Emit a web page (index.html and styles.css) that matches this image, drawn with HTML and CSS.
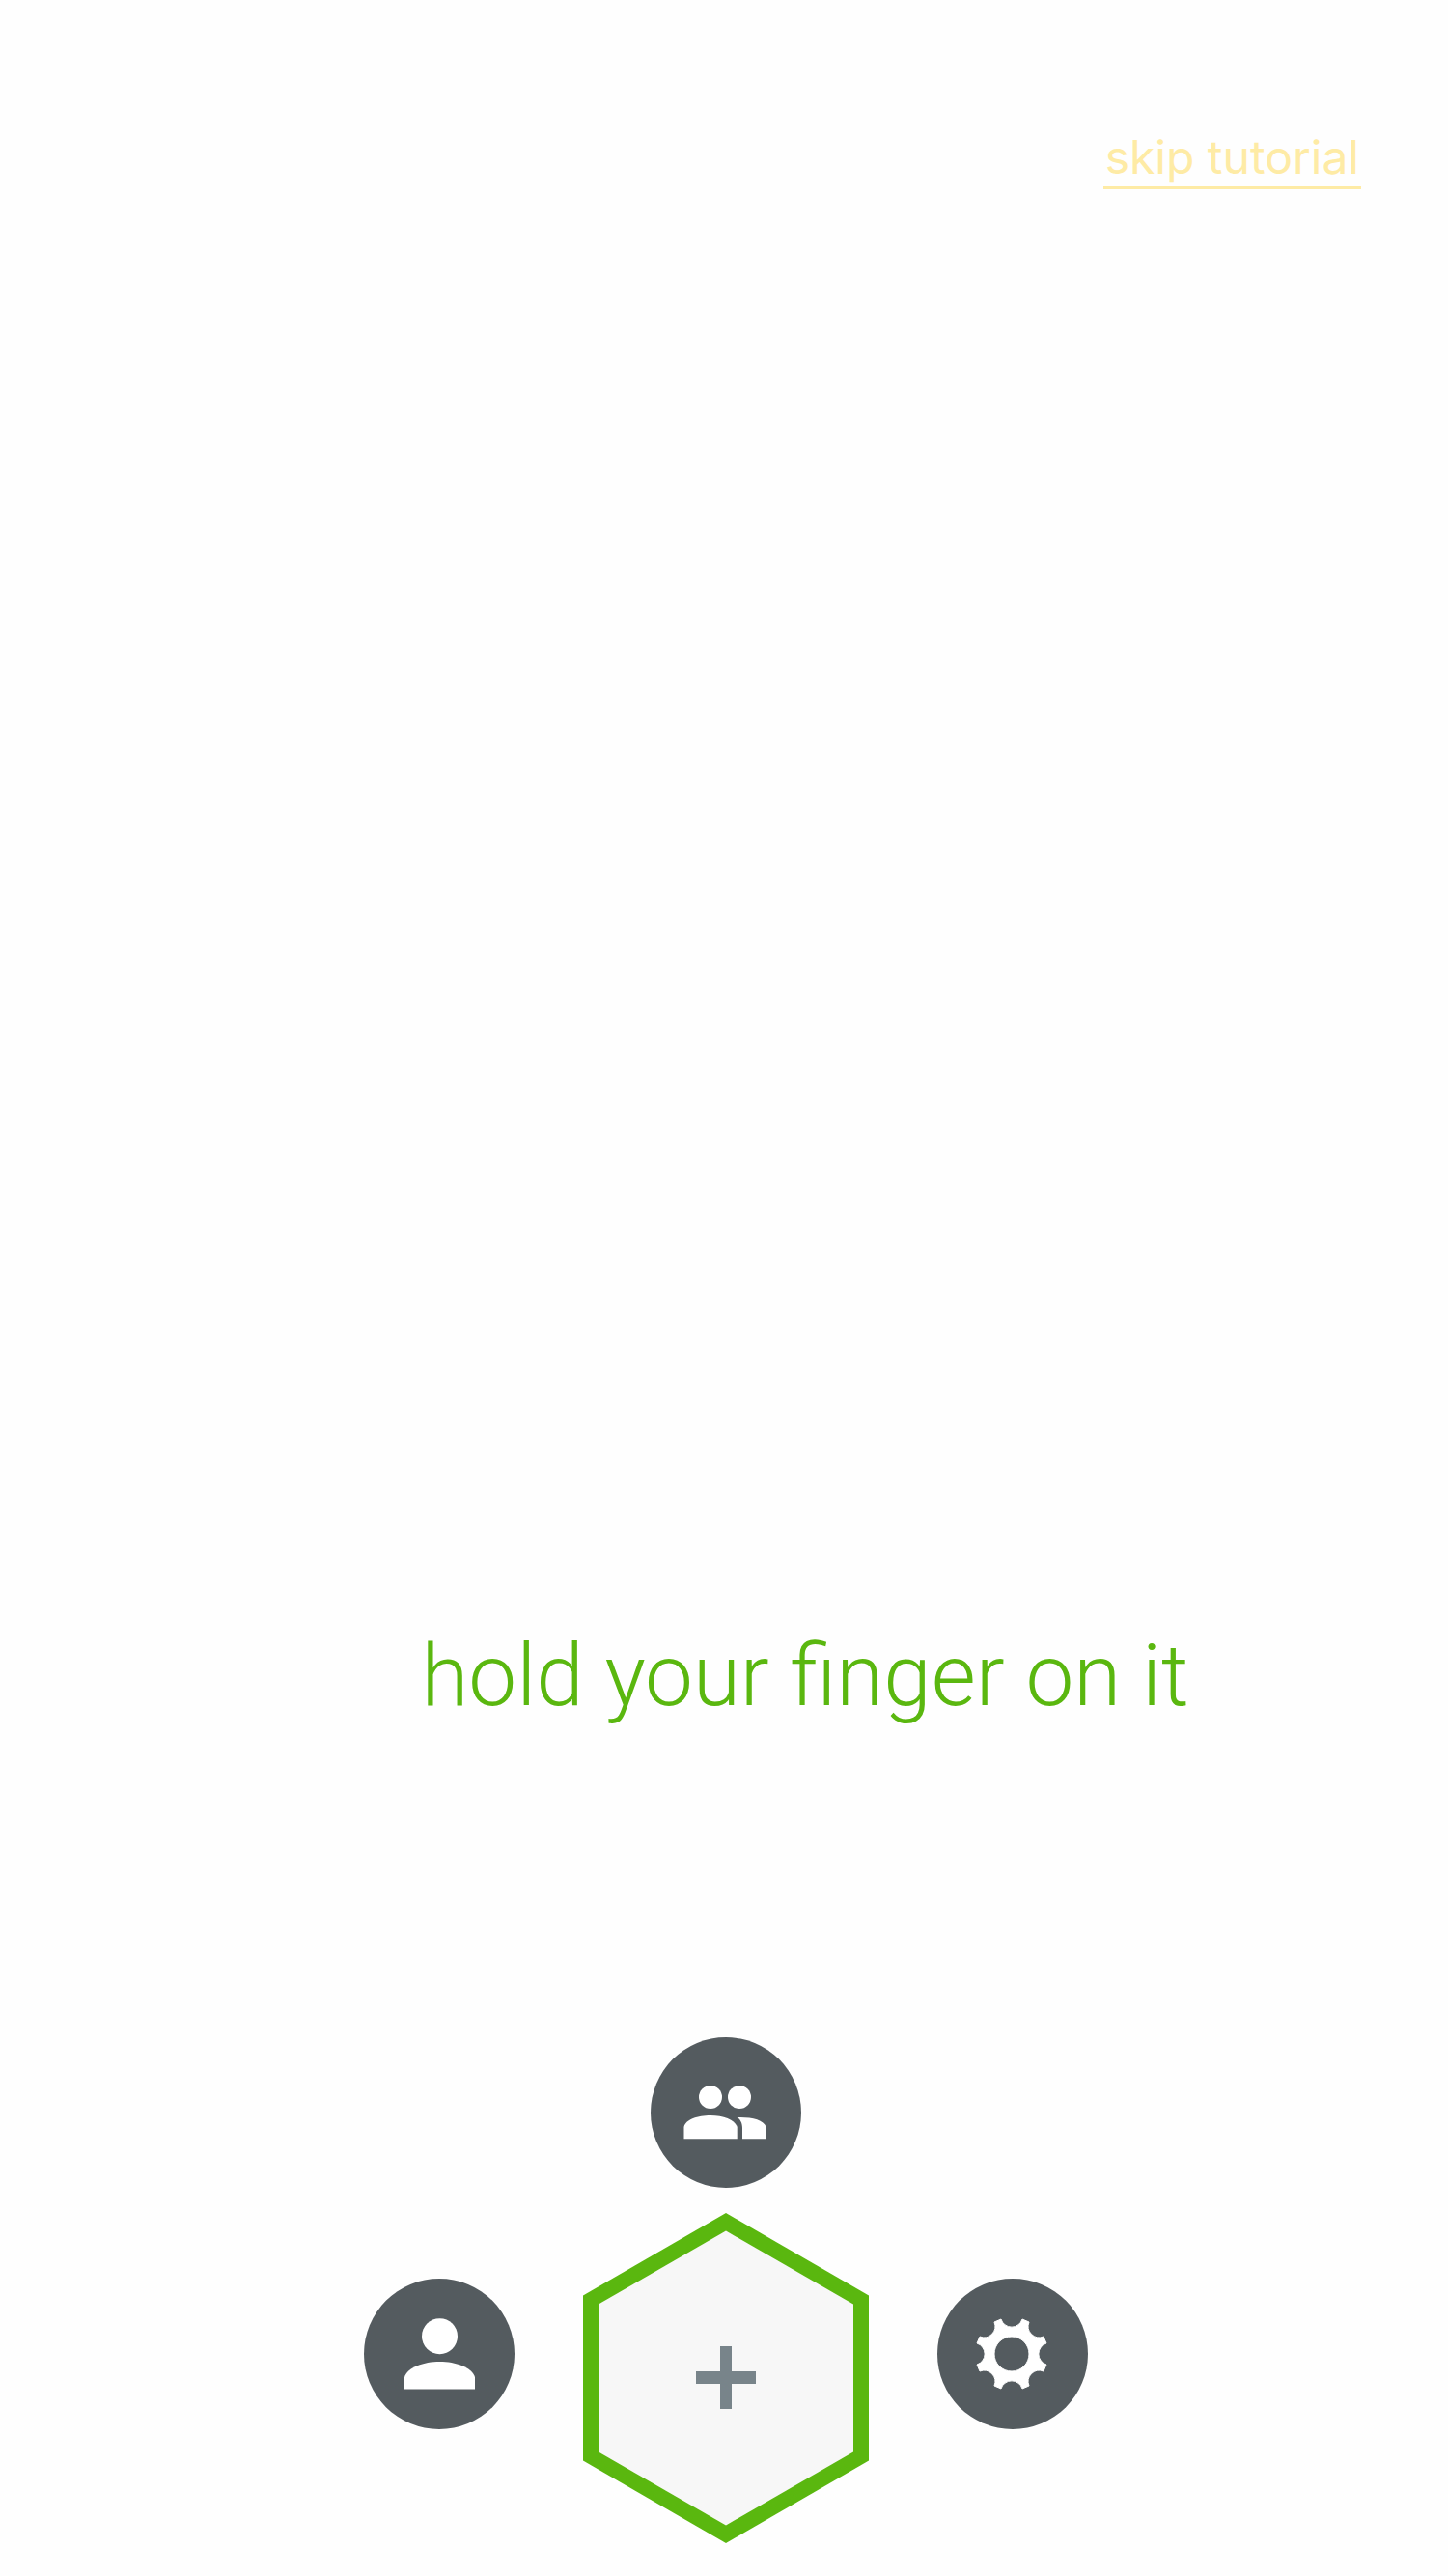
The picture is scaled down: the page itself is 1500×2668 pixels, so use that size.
FILE: index.html
```html
<!DOCTYPE html>
<html lang="en">
<head>
<meta charset="utf-8">
<meta name="viewport" content="width=device-width, initial-scale=1">
<title>Tutorial</title>
<link rel="stylesheet" href="styles.css">
</head>
<body>
<main class="tutorial">
  <header class="topbar">
    <a class="skip" href="#skip">skip tutorial</a>
  </header>
  <h1 class="hint">hold your finger on it</h1>
  <nav class="menu" aria-label="Main menu">
    <button class="item friends" type="button" aria-label="Friends">
      <svg viewBox="0 0 156 156" fill="#fff">
        <circle cx="62" cy="62" r="12"/>
        <circle cx="92" cy="62" r="12"/>
        <path d="M34.500 105.300V93C36 85 49 81 62 81S87 85 89.700 93V105.300Z"/>
        <path d="M89.500 83C104 82.500 117 85 119.700 93V105.300H95V94C95 89 93 85 89.500 83Z"/>
      </svg>
    </button>
    <button class="item profile" type="button" aria-label="Profile">
      <svg viewBox="0 0 156 156" fill="#fff">
        <circle cx="78.500" cy="59.700" r="18.500"/>
        <path d="M42 114.500V102C45 92 62 86 78.500 86S112 92 115 102V114.500Z"/>
      </svg>
    </button>
    <button class="add" type="button" aria-label="Add">
      <svg viewBox="0 0 296 342">
        <path fill="#5ab70f" d="M148 0L296 85.500V256.500L148 342L0 256.500V85.500Z"/>
        <path fill="#f7f7f7" d="M148 18.500L280 94.500V247.500L148 323.500L16 247.500V94.500Z"/>
        <path fill="#78848a" d="M142 138H154V164H179V177H154V203H142V177H117V164H142Z"/>
      </svg>
    </button>
    <button class="item settings" type="button" aria-label="Settings">
      <svg viewBox="-77 -78 156 156">
        <path fill="#fff" fill-rule="evenodd" stroke="#fff" stroke-width="1" stroke-linejoin="round" d="M-11 -36A11.500 11.500 0 0 0 11 -36L18 -33A11.500 11.500 0 0 0 33 -18L36 -11A11.500 11.500 0 0 0 36 11L33 18A11.500 11.500 0 0 0 18 33L11 36A11.500 11.500 0 0 0 -11 36L-18 33A11.500 11.500 0 0 0 -33 18L-36 11A11.500 11.500 0 0 0 -36 -11L-33 -18A11.500 11.500 0 0 0 -18 -33ZM18 0A18 18 0 1 0 -18 0A18 18 0 1 0 18 0Z"/>
      </svg>
    </button>
  </nav>
</main>
</body>
</html>
```
FILE: styles.css
```css
* {
  box-sizing: border-box;
}

body {
  margin: 0;
  background: #fefefe;
  font-family: Inter, "Open Sans", sans-serif;
}

.tutorial {
  display: flex;
  flex-direction: column;
  min-height: 100vh;
  padding: 134px 90px 34px 94px;
}

.topbar {
  display: flex;
  justify-content: flex-end;
}

.skip {
  padding: 0 2px 2px;
  border-bottom: 3px solid #feeba5;
  color: #feeba5;
  font-size: 48px;
  font-weight: 400;
  line-height: 57px;
  text-decoration: none;
}

.hint {
  margin: auto 0 320px;
  padding-left: 164px;
  color: #5ab70f;
  font-family: Roboto, Inter, sans-serif;
  font-size: 89px;
  font-weight: 300;
  line-height: 108px;
  text-align: center;
}

.menu {
  display: grid;
  grid-template-columns: 156px 296px 156px;
  grid-template-areas:
    ". friends ."
    "profile add settings";
  justify-content: center;
  align-items: center;
  justify-items: center;
  gap: 26px 71px;
}

.menu svg {
  display: block;
  width: 100%;
}

.item,
.add {
  padding: 0;
  border: 0;
  background: none;
  cursor: pointer;
}

.item {
  width: 156px;
  height: 156px;
  border-radius: 50%;
  background: #545b5f;
}

.add {
  grid-area: add;
  width: 296px;
}

.friends {
  grid-area: friends;
}

.profile,
.settings {
  margin-bottom: 50px;
}

.profile {
  grid-area: profile;
}

.settings {
  grid-area: settings;
}
```
